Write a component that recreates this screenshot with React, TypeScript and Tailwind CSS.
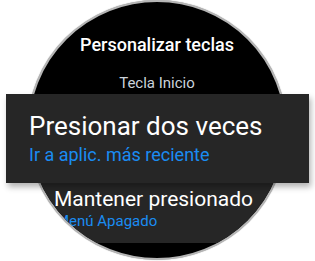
import React from 'react'

export default function App() {
  return (
    <div className="relative w-[315px] h-[261px] bg-white overflow-hidden font-['Roboto',sans-serif]">
      {/* reloj */}
      <div className="ml-[27px] w-[260px] h-[260px] rounded-full bg-black border-2 border-[#b5b5b5] overflow-hidden flex flex-col items-stretch shadow-[0_0_1px_#999]">
        <div className="pt-[32px] text-center text-white text-[18px] leading-[21px] font-medium">
          Personalizar teclas
        </div>
        <div className="mt-[20px] text-center text-[#cbd3dc] text-[15px] leading-[17px]">
          Tecla Inicio
        </div>
        <div className="mt-[91px] h-[60px] bg-[#262626] pl-[25px] pt-[4px]">
          <div className="text-white text-[21px] leading-[24px] whitespace-nowrap">Mantener presionado</div>
          <div className="mt-[1px] pl-[2px] text-[#1a8cf2] text-[15px] leading-[19px] whitespace-nowrap">Menú Apagado</div>
        </div>
      </div>

      {/* elemento seleccionado */}
      <div className="absolute left-[6px] top-[94px] w-[303px] h-[89px] bg-[#262626] pl-[23px] pt-[17px] shadow-[2px_4px_6px_rgba(0,0,0,0.3)]">
        <div className="text-white text-[26px] leading-[30px] whitespace-nowrap">Presionar dos veces</div>
        <div className="mt-[3px] text-[#1a8cf2] text-[18px] leading-[22px] whitespace-nowrap">Ir a aplic. más reciente</div>
      </div>
    </div>
  )
}
